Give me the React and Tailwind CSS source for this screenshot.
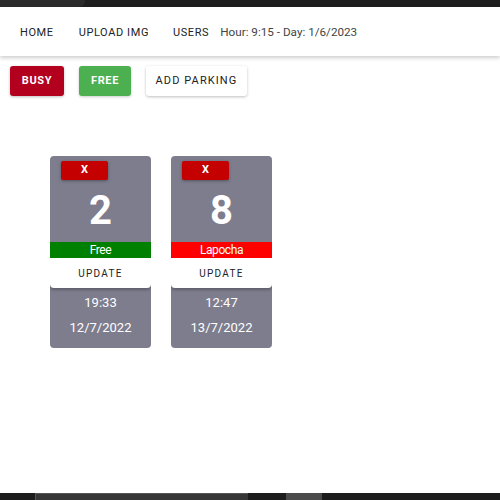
import React from 'react';

const spots = [
  { id: 1, number: 2, status: 'Free', busy: false, time: '19:33', date: '12/7/2022' },
  { id: 2, number: 8, status: 'Lapocha', busy: true, time: '12:47', date: '13/7/2022' },
];

const ParkingCard = ({ spot }) => {
  return (
    <div className="w-[101px] h-[192px] bg-[#7e7d8e] rounded-[4px] flex flex-col pt-[5px] overflow-hidden">
      <div className="pl-[11px]">
        <button className="w-[47px] h-[19px] bg-[#c40000] text-white text-[11px] font-bold rounded-[2px] shadow-[0_1px_3px_rgba(0,0,0,0.35)] flex items-center justify-center">
          X
        </button>
      </div>
      <div className="h-[62px] flex items-center justify-center text-white text-[40px] font-bold leading-none">
        {spot.number}
      </div>
      <div
        className={
          'h-[16px] flex items-center justify-center text-white text-[12px] tracking-[-0.4px] ' +
          (spot.busy ? 'bg-[#ff0000]' : 'bg-[#008000]')
        }
      >
        {spot.status}
      </div>
      <button className="h-[30px] bg-white text-[#222] text-[10px] font-normal tracking-[1.3px] rounded-b-[4px] shadow-[0_2px_3px_rgba(0,0,0,0.25)] flex items-center justify-center">
        UPDATE
      </button>
      <div className="h-[30px] flex items-center justify-center text-white text-[13px]">{spot.time}</div>
      <div className="h-[20px] flex items-center justify-center text-white text-[13px]">{spot.date}</div>
    </div>
  );
};

const App = () => {
  return (
    <div className="w-[500px] h-[500px] bg-white flex flex-col overflow-hidden font-['Roboto',sans-serif]">
      {/* window chrome strip */}
      <div className="h-[7px] bg-[#1e1e1e] flex">
        <div className="w-[85px] h-full bg-[#2a2a2a] rounded-br-[6px]"></div>
      </div>

      {/* nav */}
      <nav className="h-[49px] bg-white shadow-[0_2px_4px_rgba(0,0,0,0.2)] flex items-center pl-[20px] pt-[3px] text-[11px] text-[#222] z-10">
        <span className="tracking-[0.6px]">HOME</span>
        <span className="ml-[25px] tracking-[0.6px]">UPLOAD IMG</span>
        <span className="ml-[24px] tracking-[0.6px]">USERS</span>
        <span className="ml-[11px] text-[11.7px] text-[#444]">Hour: 9:15 - Day: 1/6/2023</span>
      </nav>

      {/* actions */}
      <div className="flex items-center gap-[15px] pl-[10px] mt-[10px]">
        <button className="w-[54px] h-[30px] bg-[#b3001e] text-white text-[11px] font-bold tracking-[0.6px] rounded-[3px] shadow-[0_1px_3px_rgba(0,0,0,0.25)]">
          BUSY
        </button>
        <button className="w-[52px] h-[30px] bg-[#4caf50] text-white text-[11px] font-bold tracking-[0.6px] rounded-[3px] shadow-[0_1px_3px_rgba(0,0,0,0.2)]">
          FREE
        </button>
        <button className="w-[101px] h-[30px] bg-white text-[#222] text-[11px] font-normal tracking-[1.1px] rounded-[3px] shadow-[0_1px_3px_rgba(0,0,0,0.25)]">
          ADD PARKING
        </button>
      </div>

      {/* parking cards */}
      <div className="flex gap-[20px] pl-[50px] mt-[60px]">
        {spots.map((spot) => (
          <ParkingCard key={spot.id} spot={spot} />
        ))}
      </div>

      <div className="flex-1"></div>

      {/* taskbar strip */}
      <div className="h-[7px] bg-[#1c1c1c] flex">
        <div className="ml-[35px] w-[213px] h-full bg-[#363636] border-t border-l border-[#555]"></div>
        <div className="ml-[38px] w-[36px] h-full bg-[#4a4a4a]"></div>
      </div>
    </div>
  );
};

export default App;
